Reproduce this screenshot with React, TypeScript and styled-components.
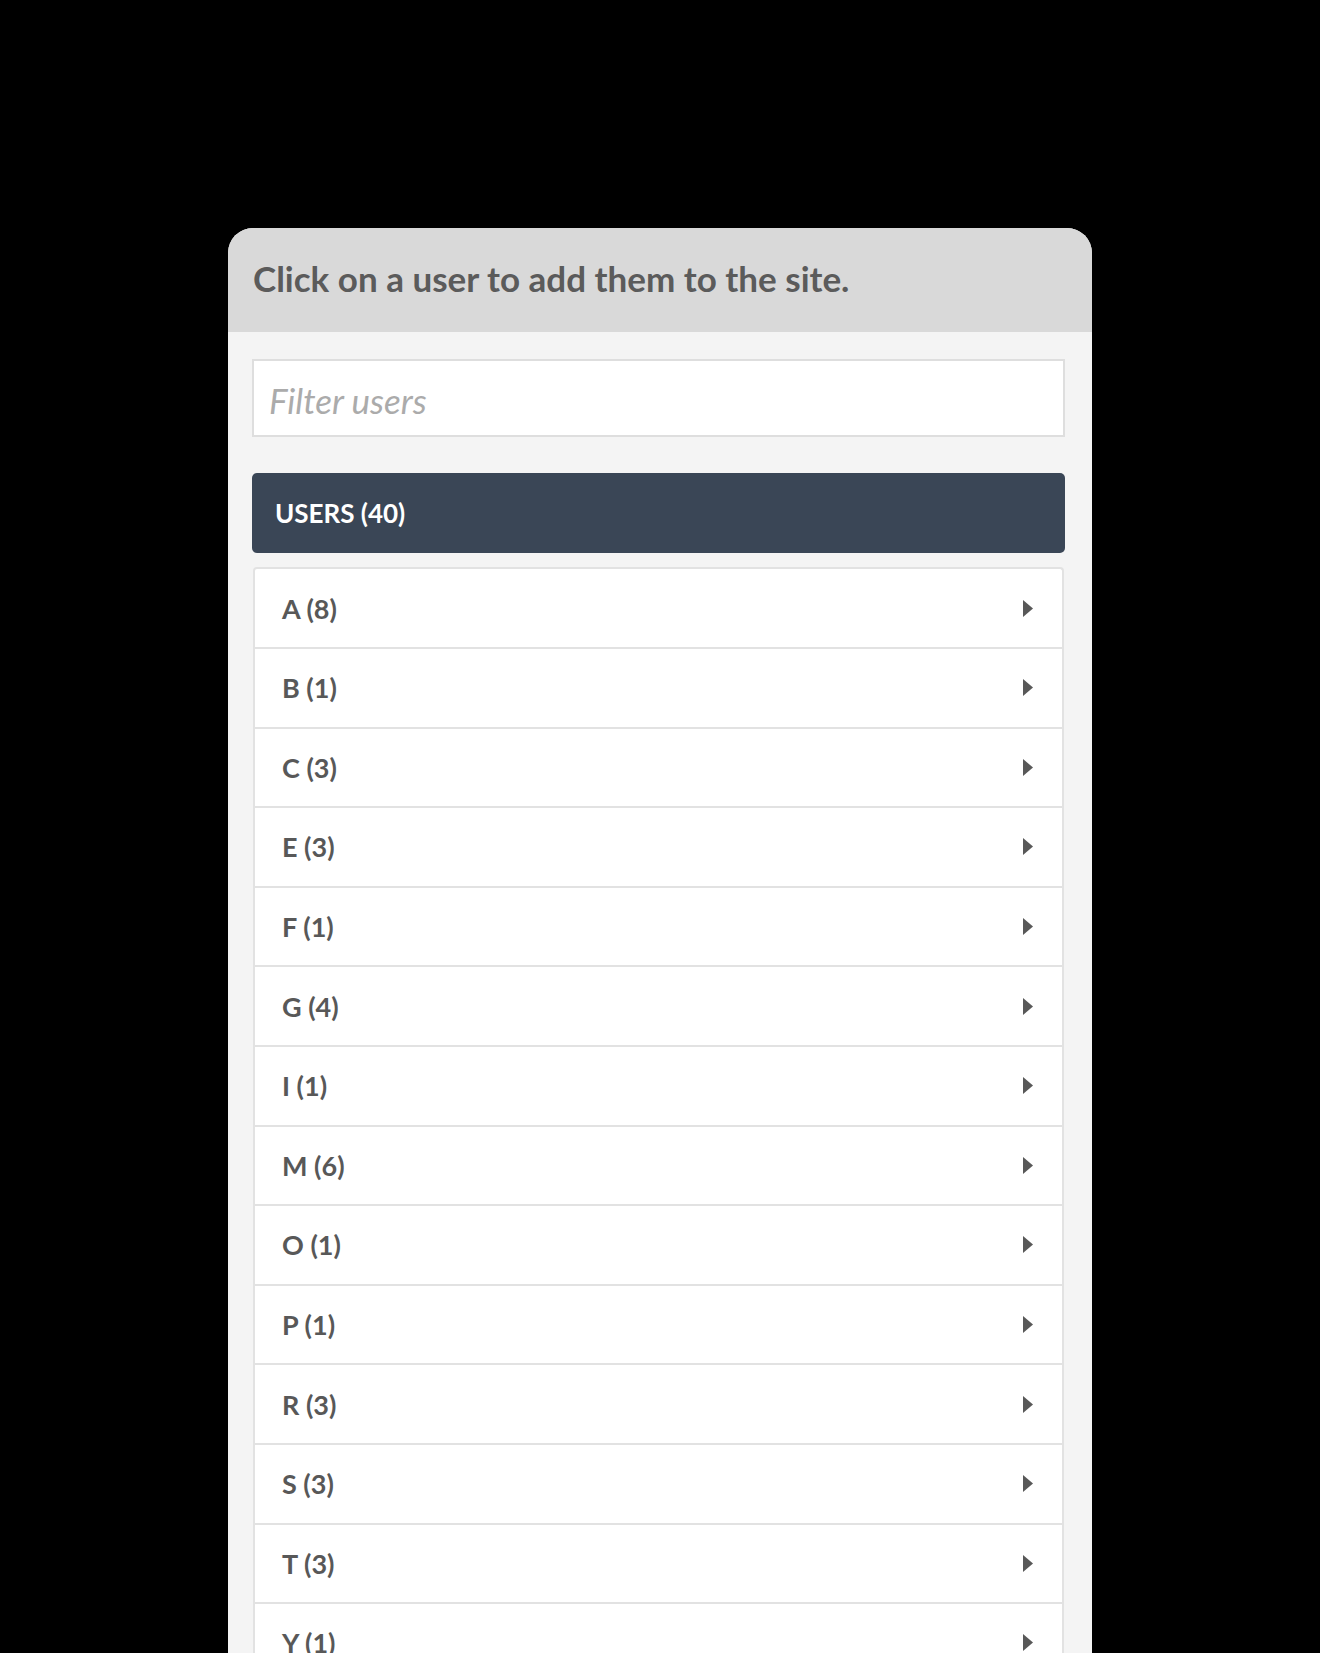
import React from "react";
import styled, { createGlobalStyle } from "styled-components";

const Global = createGlobalStyle`
  html, body { margin: 0; padding: 0; background: #000; }
  body { font-family: Lato, "Open Sans", sans-serif; }
  * { box-sizing: border-box; }
`;

const Page = styled.div`
  width: 1320px;
  height: 1653px;
  overflow: hidden;
  background: #000;
  padding: 228px 0 0 228px;
`;

const Card = styled.div`
  width: 864px;
  border-radius: 25px 25px 0 0;
  overflow: hidden;
  background: #f4f4f4;
`;

const Header = styled.div`
  height: 104px;
  background: #d9d9d9;
  display: flex;
  align-items: center;
  padding: 0 25px 4px 25px;
  font-size: 35px;
  font-weight: 700;
  color: #5b5b5b;
`;

const Body = styled.div`
  padding: 27px 27px 40px 24px;
  display: flex;
  flex-direction: column;
`;

const FilterInput = styled.input`
  height: 78px;
  width: 100%;
  border: 2px solid #dedede;
  background: #fff;
  padding: 4px 15px 0 15px;
  font-family: Lato, sans-serif;
  font-size: 35px;
  font-style: italic;
  outline: none;
  &::placeholder { color: #ababab; }
`;

const GroupBar = styled.div`
  margin-top: 36px;
  height: 80px;
  background: #3a4656;
  border-radius: 5px;
  display: flex;
  align-items: center;
  padding: 0 23px;
  color: #fff;
  font-size: 26px;
  font-weight: 700;
`;

const List = styled.div`
  margin-top: 14px;
  margin-left: 1px;
  margin-right: 1px;
  border: 2px solid #e2e2e2;
  border-bottom: none;
  border-radius: 4px 4px 0 0;
  background: #fff;
`;

const Row = styled.div`
  height: 79.6px;
  display: flex;
  align-items: center;
  justify-content: space-between;
  padding: 0 29px 0 27px;
  border-top: 2px solid #e2e2e2;
  &:first-child { border-top: none; height: 78px; }
  font-size: 27px;
  font-weight: 700;
  color: #585858;
`;

const Caret = () => (
  <svg width="10" height="17" viewBox="0 0 10 17">
    <polygon points="0,0 10,8.5 0,17" fill="#585858" />
  </svg>
);

const groups: [string, number][] = [
  ["A", 8], ["B", 1], ["C", 3], ["E", 3], ["F", 1], ["G", 4], ["I", 1],
  ["M", 6], ["O", 1], ["P", 1], ["R", 3], ["S", 3], ["T", 3], ["Y", 1], ["Z", 1],
];

export default function App() {
  return (
    <Page>
      <Global />
      <Card>
        <Header>Click on a user to add them to the site.</Header>
        <Body>
          <FilterInput placeholder="Filter users" />
          <GroupBar>USERS (40)</GroupBar>
          <List>
            {groups.map(([l, n]) => (
              <Row key={l}>
                <span>{l} ({n})</span>
                <Caret />
              </Row>
            ))}
          </List>
        </Body>
      </Card>
    </Page>
  );
}
